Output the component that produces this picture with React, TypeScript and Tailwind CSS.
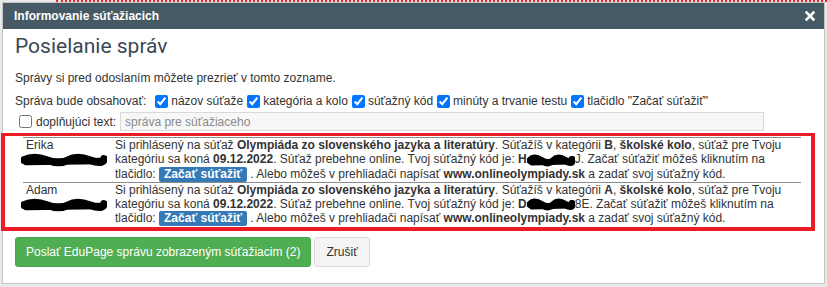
import React from "react";

const options = [
  "názov súťaže",
  "kategória a kolo",
  "súťažný kód",
  "minúty a trvanie testu",
  'tlačidlo "Začať súťažiť"',
];

function Scribble({ w, h }: { w: number; h: number }) {
  // redaction blob over names / codes
  return (
    <svg width={w} height={h} viewBox={`0 0 ${w} ${h}`} className="inline-block align-middle">
      <path
        d={`M3 ${h / 2} Q ${w * 0.15} 2 ${w * 0.3} ${h / 2} T ${w * 0.55} ${h / 2} T ${w * 0.8} ${h / 2} T ${w - 3} ${h / 2 - 1}`}
        stroke="#000"
        strokeWidth={h * 0.55}
        strokeLinecap="round"
        fill="none"
      />
      <path
        d={`M5 ${h / 2 + 2} L ${w - 6} ${h / 2 + 1}`}
        stroke="#000"
        strokeWidth={h * 0.45}
        strokeLinecap="round"
      />
    </svg>
  );
}

function StartButton() {
  return (
    <span className="inline-block bg-[#337ab7] text-white font-bold px-[5px] leading-[15px] rounded-[2px]">
      Začať súťažiť
    </span>
  );
}

const rows = [
  { name: "Erika", cat: "B", pre: "H", post: "J" },
  { name: "Adam", cat: "A", pre: "D", post: "8E" },
];

export default function App() {
  return (
    <div className="w-[827px] h-[287px] bg-[#e8e8e8] font-['Liberation_Sans',Arial,sans-serif] text-[#333] text-[12px] overflow-hidden">
      {/* page behind the dialog */}
      <div className="h-[2px] ml-[56px] border-t-2 border-dotted border-[#e8202a]" />

      <div className="ml-[2px] w-[823px] h-[282px] bg-white border border-[#c4c4c4]">
        {/* title bar */}
        <div className="h-[26px] bg-[#465a65] flex items-center justify-between pl-[11px] pr-[9px]">
          <span className="text-white font-bold text-[12px]">Informovanie súťažiacich</span>
          <svg width="10" height="10" viewBox="0 0 10 10">
            <path d="M1.5 1.5 L8.5 8.5 M8.5 1.5 L1.5 8.5" stroke="#fff" strokeWidth="2.6" strokeLinecap="square" />
          </svg>
        </div>

        <div className="px-[12px]">
          <h1 className="font-['Roboto',sans-serif] text-[21px] leading-[26px] text-[#3a4853] mt-[4px]">
            Posielanie správ
          </h1>
          <p className="leading-[15px] mt-[12px]">Správy si pred odoslaním môžete prezrieť v tomto zozname.</p>

          <div className="flex items-center leading-[15px] mt-[8px]">
            <span className="mr-[9px]">Správa bude obsahovať:</span>
            {options.map((o) => (
              <label key={o} className="flex items-center mr-[4px]">
                <input type="checkbox" defaultChecked className="w-[13px] h-[13px] m-0 mr-[3px] accent-[#0075ff]" />
                {o}
              </label>
            ))}
          </div>

          <div className="flex items-center mt-[3px] pl-[4px]">
            <input type="checkbox" className="w-[13px] h-[13px] m-0 mr-[4px]" />
            <span className="mr-[4px]">doplňujúci text:</span>
            <input
              type="text"
              placeholder="správa pre súťažiaceho"
              className="w-[644px] h-[19px] bg-[#f7f7f7] border border-[#d9d9d9] px-[4px] text-[12px] placeholder:text-[#8a8a8a] outline-none"
            />
          </div>

          {/* annotated table */}
          <div className="-ml-[14px] mt-[2px] w-[814px] border-[4px] border-t-[3px] border-[#ed1c24] pl-[18px] pr-[10px] pt-[1px] pb-[1px]">
            {rows.map((r) => (
              <div key={r.name} className="flex border-t border-[#8c8c8c] leading-[14.33px]">
                <div className="w-[92px] shrink-0 pl-[3px]">
                  <div>{r.name}</div>
                  <div className="-ml-[5px]">
                    <Scribble w={86} h={14} />
                  </div>
                </div>
                <div className="whitespace-nowrap">
                  <div>
                    Si prihlásený na súťaž <b>Olympiáda zo slovenského jazyka a literatúry</b>. Súťažíš v kategórii{" "}
                    <b>{r.cat}</b>, <b>školské kolo</b>, súťaž pre Tvoju
                  </div>
                  <div>
                    kategóriu sa koná <b>09.12.2022</b>. Súťaž prebehne online. Tvoj súťažný kód je: <b>{r.pre}</b>
                    <Scribble w={48} h={13} />
                    {r.post}. Začať súťažiť môžeš kliknutím na
                  </div>
                  <div>
                    tlačidlo: <StartButton /> . Alebo môžeš v prehliadači napísať <b>www.onlineolympiady.sk</b> a zadať
                    svoj súťažný kód.
                  </div>
                </div>
              </div>
            ))}
          </div>

          <div className="flex gap-[3px] mt-[6px]">
            <button className="h-[30px] px-[10px] bg-[#4fae52] text-white rounded-[3px] border border-[#48a44b]">
              Poslať EduPage správu zobrazeným súťažiacim (2)
            </button>
            <button className="h-[30px] px-[11px] bg-[#f4f4f4] text-[#333] rounded-[3px] border border-[#dcdcdc]">
              Zrušiť
            </button>
          </div>
        </div>
      </div>
    </div>
  );
}
